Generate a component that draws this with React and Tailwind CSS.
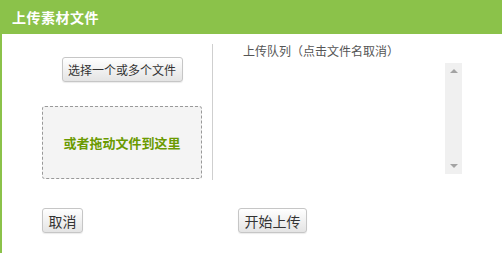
const font = { fontFamily: '"Noto Sans CJK SC", "DejaVu Sans", sans-serif' }

function Btn({ children, className = '' }) {
  return (
    <button
      className={`h-[25px] rounded-[3px] border border-[#c6c6c6] bg-gradient-to-b from-white to-[#e4e4e4] leading-none text-[#333] shadow-[0_1px_1px_rgba(0,0,0,0.08)] ${className}`}
    >
      {children}
    </button>
  )
}

export default function App() {
  return (
    <div className="w-[502px] h-[253px] bg-white flex flex-col overflow-hidden" style={font}>
      <div className="h-[34px] shrink-0 bg-[#8bc24a] flex items-center px-3">
        <h1 className="text-white text-[14px] font-bold tracking-[0.5px]">上传素材文件</h1>
      </div>

      <div className="flex-1 border-l-2 border-[#8bc24a] flex flex-col">
        <div className="flex pt-[10px]">
          <div className="w-[210px] pl-10 pr-[10px] flex flex-col">
            <div className="flex justify-center mt-[13px]">
              <Btn className="w-[121px] text-[12px]">选择一个或多个文件</Btn>
            </div>
            <div className="mt-6 h-[73px] rounded-[3px] border border-dashed border-[#999] bg-[#f4f4f4] flex items-center justify-center">
              <span className="text-[13px] font-bold text-[#6a9a00]">或者拖动文件到这里</span>
            </div>
          </div>

          <div className="w-px h-[136px] bg-[#cfcfcf]" />

          <div className="flex-1 pl-[30px]">
            <p className="text-[12px] leading-[14px] text-[#555]">上传队列（点击文件名取消）</p>
            <div className="mt-[5px] w-[219px] h-[111px] flex justify-end">
              <div className="w-[17px] h-full bg-[#f0f0f0] flex flex-col items-center justify-between py-[6px]">
                <div className="w-0 h-0 border-l-[4px] border-r-[4px] border-b-[4px] border-l-transparent border-r-transparent border-b-[#a3a3a3]" />
                <div className="w-0 h-0 border-l-[4px] border-r-[4px] border-t-[4px] border-l-transparent border-r-transparent border-t-[#a3a3a3]" />
              </div>
            </div>
          </div>
        </div>

        <div className="flex pl-10 mt-[28px]">
          <Btn className="w-[41px] text-[14px]">取消</Btn>
          <Btn className="w-[69px] ml-[155px] text-[14px]">开始上传</Btn>
        </div>
      </div>
    </div>
  )
}
